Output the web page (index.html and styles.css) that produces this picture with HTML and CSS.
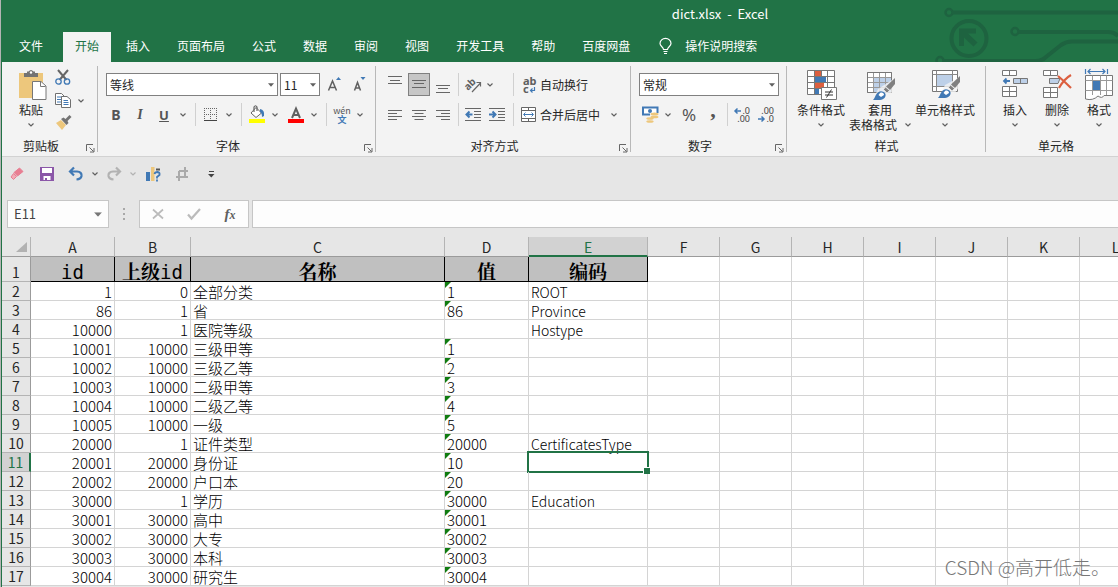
FILE: index.html
```html
<!DOCTYPE html>
<html lang="zh-CN">
<head>
<meta charset="utf-8">
<title>dict.xlsx - Excel</title>
<link rel="stylesheet" href="styles.css">
</head>
<body>
<svg class="defs" aria-hidden="true">
  <symbol id="chev" viewBox="0 0 6 4"><path d="M.5 .5L3 3L5.500 .5" fill="none" stroke="currentColor" stroke-width="1.200"/></symbol>
  <symbol id="tri" viewBox="0 0 7 4"><path d="M0 0H7L3.500 4Z" fill="currentColor"/></symbol>
  <symbol id="launch" viewBox="0 0 9 9"><path d="M.5 7V.5H7M3.500 3.500L7.500 7.500M8 4V8H4" fill="none" stroke="#666"/></symbol>
  <symbol id="brush" viewBox="0 0 24 24"><path d="M23 1V7L18 13L14 9.500Z" fill="#808080"/><path d="M13.500 10L17.500 13.500L15 16L11.500 12.500Z" fill="#808080" stroke="#f3f3f3" stroke-width=".7"/><path d="M1 23C3 21 3 19 4.500 17C7 13 11 14 13 16C15 19 12 23 8 23Z" fill="#4179b5"/><path d="M8 16C10 15 12 16 12 18L9 20L6.500 18Z" fill="#fff"/></symbol>
</svg>
<div class="app">
  <header class="top">
    <svg class="circuit" width="190" height="62" viewBox="0 0 190 62" aria-hidden="true">
      <g fill="none" stroke="#1e6340" stroke-width="4">
        <circle cx="21" cy="12.500" r="3.500" stroke-width="2.500"/><path d="M25 12.500H190"/>
        <circle cx="87" cy="31.500" r="3.500" stroke-width="2.500"/><path d="M91 32H180Q186 32 190 36"/>
        <circle cx="12" cy="60.500" r="3.500" stroke-width="2.500"/><path d="M16 61H108Q114 61 118 57L133 45Q138 41.500 144 41.500H190"/>
        <circle cx="41" cy="38.500" r="17.500"/>
      </g>
      <path d="M31 28.500H48V33.500H40L49.500 42.500L45.500 46.500L36 37.500V46H31Z" fill="#1e6340"/>
    </svg>
    <h1 class="title">dict.xlsx&nbsp; -&nbsp; Excel</h1>
    <nav class="tabs">
      <button class="tab file">文件</button>
      <button class="tab active">开始</button>
      <button class="tab">插入</button>
      <button class="tab">页面布局</button>
      <button class="tab">公式</button>
      <button class="tab">数据</button>
      <button class="tab">审阅</button>
      <button class="tab">视图</button>
      <button class="tab">开发工具</button>
      <button class="tab">帮助</button>
      <button class="tab">百度网盘</button>
      <button class="tab tell"><svg width="13" height="17" viewBox="0 0 13 17"><path d="M4.500 11.500C4.500 9 1 8.500 1 5.500A5.300 5 0 0 1 12 5.500C12 8.500 8.500 9 8.500 11.500Z" fill="none" stroke="#fff" stroke-width="1.200"/><path d="M4.500 13.500H8.500M5 15.500H8" stroke="#fff"/></svg>操作说明搜索</button>
    </nav>
  </header>

  <section class="ribbon" aria-label="功能区">
    <div class="group clip">
      <div class="body cols">
        <button class="big paste"><svg width="30" height="32" viewBox="0 0 30 32"><g transform="translate(2 0)"><path d="M1 3H25V28H1Z" fill="#edc77c"/><path d="M6 3H9V1.500H10.500Q13 -1.500 15.500 1.500H17V3H20V7H6Z" fill="#737373"/><circle cx="13" cy="2.500" r="1.200" fill="#fff"/><path d="M14.500 11.500H23L28 16V29.500H14.500Z" fill="#fff" stroke="#777"/><path d="M22.500 12V16.500H27.500" fill="none" stroke="#777"/></g></svg><span>粘贴</span><svg class="chev"><use href="#chev"/></svg></button>
        <div class="stack">
          <button aria-label="剪切" class="sm"><svg width="16" height="17" viewBox="0 0 16 17"><path d="M3 1L11.500 11M13 1L4.500 11" stroke="#666" stroke-width="2"/><circle cx="3.500" cy="12.500" r="2.700" fill="none" stroke="#4179b5" stroke-width="1.300"/><circle cx="12" cy="12.500" r="2.700" fill="none" stroke="#4179b5" stroke-width="1.300"/></svg></button>
          <div class="line"><button aria-label="复制" class="sm"><svg width="16" height="15" viewBox="0 0 16 15"><path d="M.5 .5H6.500L9 3V11.500H.5Z" fill="#fff" stroke="#707070"/><path d="M2 4H7M2 6.500H6M2 9H6" stroke="#4179b5"/><path d="M6.500 3.500H12L15.500 6.500V14.500H6.500Z" fill="#fff" stroke="#707070"/><path d="M8.500 7.500H13M8.500 9.500H13.500M8.500 11.500H13.500" stroke="#4179b5"/></svg></button><button aria-label="复制选项" class="dd"><svg class="chev"><use href="#chev"/></svg></button></div>
          <button aria-label="格式刷" class="sm"><svg width="17" height="15" viewBox="0 0 17 15"><path d="M1 7L6 4L11 9L7 14Z" fill="#edc77c"/><path d="M6 3L8.500 1.500L10.500 3L14.500 -1L16.500 1L12.500 5L13.500 7L11.500 9Z" fill="#737373"/></svg></button>
        </div>
      </div>
      <div class="caption"><span>剪贴板</span><button aria-label="剪贴板设置" class="launch"><svg width="9" height="9"><use href="#launch"/></svg></button></div>
    </div>

    <div class="group font">
      <div class="body rows">
        <div class="line combos">
          <label class="combo wide"><select aria-label="字体"><option>等线</option></select><svg width="6" height="4"><use href="#tri"/></svg></label>
          <label class="combo size"><select aria-label="字号"><option>11</option></select><svg width="6" height="4"><use href="#tri"/></svg></label>
          <button aria-label="增大字号" class="b24"><svg width="14" height="16" viewBox="0 0 14 16"><path d="M1.500 13.500L5.500 4L9.500 13.500M3 10.500H8" fill="none" stroke="#606060" stroke-width="1.500"/><path d="M9 3L11.500 0L14 3Z" fill="#4179b5"/></svg></button>
          <button aria-label="减小字号" class="b24"><svg width="14" height="16" viewBox="0 0 14 16"><path d="M1.500 13.500L4.500 5.500L7.500 13.500M2.500 11H6.500" fill="none" stroke="#606060" stroke-width="1.500"/><path d="M7.500 0H12.500L10 3Z" fill="#4179b5"/></svg></button>
        </div>
        <div class="line">
          <button class="b24 bold">B</button><button class="b24 ital">I</button><button class="b24 under">U</button>
          <button aria-label="下划线选项" class="dd"><svg class="chev"><use href="#chev"/></svg></button><i class="sep"></i>
          <button aria-label="边框" class="b22"><svg width="14" height="14" viewBox="0 0 14 14"><path d="M0 .5H13M.5 0V12M12.500 0V12M6.500 0V12M0 6.500H13" fill="none" stroke="#666" stroke-dasharray="1 1"/><path d="M0 12.500H13" stroke="#444"/></svg></button>
          <button aria-label="边框选项" class="dd"><svg class="chev"><use href="#chev"/></svg></button><i class="sep"></i>
          <button aria-label="填充颜色" class="b22"><svg width="18" height="18" viewBox="0 0 18 18"><path d="M3 7L8 1.500L13.500 7L8 11.500Z" fill="#fff" stroke="#666"/><path d="M6 6V1Q7.500 -1.500 9 1V5" fill="none" stroke="#666" stroke-width="1.200"/><path d="M12 3Q17 4 16 10L14 11Q14 7 12 6Z" fill="#4179b5"/><path d="M1 13H17V17H1Z" fill="#ff0"/></svg></button>
          <button aria-label="填充颜色选项" class="dd"><svg class="chev"><use href="#chev"/></svg></button>
          <button aria-label="字体颜色" class="b25"><svg width="16" height="18" viewBox="0 0 16 18"><path d="M4 12L8 2.500L12 12M5.500 9H10.500" fill="none" stroke="#606060" stroke-width="2"/><path d="M0 13H16V17H0Z" fill="red"/></svg></button>
          <button aria-label="字体颜色选项" class="dd"><svg class="chev"><use href="#chev"/></svg></button><i class="sep"></i>
          <button class="b22 pinyin"><span>wén</span><b>文</b></button>
          <button aria-label="拼音选项" class="dd"><svg class="chev"><use href="#chev"/></svg></button>
        </div>
      </div>
      <div class="caption"><span>字体</span><button aria-label="字体设置" class="launch"><svg width="9" height="9"><use href="#launch"/></svg></button></div>
    </div>

    <div class="group align">
      <div class="body rows">
        <div class="line">
          <button aria-label="顶端对齐" class="b24"><svg width="14" height="16" viewBox="0 0 14 16"><path d="M0 -.5H14M2 3.500H12M0 6.500H14" stroke="#666"/></svg></button>
          <button aria-label="垂直居中" class="b24 on"><svg width="14" height="16" viewBox="0 0 14 16"><path d="M0 3.500H14M2 6.500H12M0 10.500H14" stroke="#666"/></svg></button>
          <button aria-label="底端对齐" class="b24"><svg width="14" height="16" viewBox="0 0 14 16"><path d="M0 8.500H14M2 11.500H12M0 15.500H14" stroke="#666"/></svg></button>
          <i class="sep thin"></i>
          <button aria-label="方向" class="b24"><svg width="17" height="16" viewBox="0 0 17 16"><text x="0" y="11" transform="rotate(-45 5 9)" class="ab">ab</text><path d="M7 15L15.500 6M11.500 5.500H15.500V9.500" fill="none" stroke="#666" stroke-width="1.200"/></svg></button>
          <button aria-label="方向选项" class="dd after"><svg class="chev"><use href="#chev"/></svg></button>
          <i class="sep edge"></i>
          <button class="txt"><span class="wrap"><span>ab</span><span>c<svg width="6" height="6" viewBox="0 0 6 6"><path d="M4.500 0V3.500H.5M2.500 1.500L.5 3.500L2.500 5.500" fill="none" stroke="#4179b5" stroke-width="1.200"/></svg></span></span>自动换行</button>
        </div>
        <div class="line">
          <button aria-label="左对齐" class="b24"><svg width="14" height="12" viewBox="0 0 14 12"><path d="M0 1.500H14M0 4.500H9M0 7.500H14M0 10.500H9" stroke="#666"/></svg></button>
          <button aria-label="居中" class="b24"><svg width="14" height="12" viewBox="0 0 14 12"><path d="M0 1.500H14M2.500 4.500H11.500M0 7.500H14M2.500 10.500H11.500" stroke="#666"/></svg></button>
          <button aria-label="右对齐" class="b24"><svg width="14" height="12" viewBox="0 0 14 12"><path d="M0 1.500H14M5 4.500H14M0 7.500H14M5 10.500H14" stroke="#666"/></svg></button>
          <i class="sep thin"></i>
          <button aria-label="减少缩进" class="b24"><svg width="16" height="14" viewBox="0 0 16 14"><path d="M0 .5H16M9 3.500H16M9 6.500H16M9 9.500H16M0 12.500H16" stroke="#666"/><path d="M7.500 6.500H2M4.500 3.500L1.500 6.500L4.500 9.500" fill="none" stroke="#4179b5" stroke-width="2"/></svg></button>
          <button aria-label="增加缩进" class="b24"><svg width="16" height="14" viewBox="0 0 16 14"><path d="M0 .5H16M9 3.500H16M9 6.500H16M9 9.500H16M0 12.500H16" stroke="#666"/><path d="M0 6.500H6M3.500 3.500L6.500 6.500L3.500 9.500" fill="none" stroke="#4179b5" stroke-width="2"/></svg></button>
          <i class="sep edge"></i>
          <button class="txt"><svg width="18" height="15" viewBox="0 0 18 15"><path d="M1.500 .5H15.500V14.500H1.500ZM1.500 3.500H15.500M1.500 11.500H15.500M8.500 .5V3.500M8.500 11.500V14.500" fill="#fff" stroke="#666"/><path d="M4 7.500H13M5.500 5.500L3.500 7.500L5.500 9.500M11.500 5.500L13.500 7.500L11.500 9.500" fill="none" stroke="#4179b5"/></svg>合并后居中</button>
          <button aria-label="合并选项" class="dd"><svg class="chev"><use href="#chev"/></svg></button>
        </div>
      </div>
      <div class="caption"><span>对齐方式</span><button aria-label="对齐设置" class="launch"><svg width="9" height="9"><use href="#launch"/></svg></button></div>
    </div>

    <div class="group number">
      <div class="body rows">
        <div class="line"><label class="combo full"><select aria-label="数字格式"><option>常规</option></select><svg width="6" height="4"><use href="#tri"/></svg></label></div>
        <div class="line">
          <button aria-label="会计格式" class="b22"><svg width="17" height="17" viewBox="0 0 17 17"><path d="M1 1.500H15.500V8.500H1Z" fill="#fff" stroke="#4179b5" stroke-width="2"/><circle cx="8" cy="5" r="2" fill="#4179b5"/><path d="M8 7H17V17H4V11H8Z" fill="#f3f3f3"/><g fill="#edc77c"><ellipse cx="12.500" cy="8" rx="4" ry="1.600"/><ellipse cx="12.500" cy="11" rx="4" ry="1.300"/><ellipse cx="8" cy="12.500" rx="3.700" ry="1.300"/><ellipse cx="8" cy="15.500" rx="3.700" ry="1.300"/></g></svg></button>
          <button aria-label="会计格式选项" class="dd"><svg class="chev"><use href="#chev"/></svg></button>
          <button class="pct">%</button>
          <button class="comma">,</button>
          <i class="sep thin"></i>
          <button aria-label="增加小数位数" class="b24 dec"><span><svg width="7" height="6" viewBox="0 0 7 6"><path d="M7 3H1M3.500 .5L1 3L3.500 5.500" fill="none" stroke="#4179b5" stroke-width="1.500"/></svg>.0</span><span>.00</span></button>
          <button aria-label="减少小数位数" class="b24 dec"><span>.00</span><span><svg width="7" height="6" viewBox="0 0 7 6"><path d="M0 3H6M3.500 .5L6 3L3.500 5.500" fill="none" stroke="#4179b5" stroke-width="1.500"/></svg>.0</span></button>
        </div>
      </div>
      <div class="caption"><span>数字</span><button aria-label="数字设置" class="launch"><svg width="9" height="9"><use href="#launch"/></svg></button></div>
    </div>

    <div class="group styles">
      <div class="body cols">
        <button class="big w52"><svg width="30" height="32" viewBox="0 0 30 32"><g transform="translate(1 0)"><path d="M.5 .5H27.500V24.500H.5Z" fill="#fff"/><path d="M8 .5H14V6H8ZM8 13H17V18H8Z" fill="#dc5f3f"/><path d="M8 7H19V12H8ZM8 19H12V25H8Z" fill="#4179b5"/><path d="M.5 .5H27.500V24.500H.5ZM7.500 .5V24.500M14.500 .5V7M20.500 .5V18M.5 6.500H27.500M.5 12.500H27.500M.5 18.500H27.500" fill="none" stroke="#777"/><path d="M14.500 17.500H29.500V29.500H14.500Z" fill="#fff" stroke="#777"/><path d="M18 22H26M18 25H26M24.500 19.500L19.500 27.500" stroke="#333"/></g></svg><span>条件格式</span><svg class="chev"><use href="#chev"/></svg></button>
        <button class="big w66"><svg width="30" height="32" viewBox="0 0 30 32"><g transform="translate(1 0)"><path d="M1.500 2.500H25.500V22.500H1.500Z" fill="#fff"/><path d="M7 8H25V22H7Z" fill="#bdd0e8"/><path d="M1.500 2.500H25.500V22.500H1.500ZM1.500 7.500H25.500M1.500 12.500H25.500M1.500 17.500H25.500M7.500 2.500V22.500M13.500 2.500V22.500M19.500 2.500V22.500" fill="none" stroke="#999"/><path d="M1.500 2.500H25.500V22.500H1.500Z" fill="none" stroke="#777"/><path d="M29 8L12 19L7 30H20L29 18Z" fill="#f3f3f3" opacity=".8"/><use href="#brush" x="6" y="7" width="24" height="24"/></g></svg><span>套用</span><span class="second">表格格式<svg class="chev"><use href="#chev"/></svg></span></button>
        <button class="big w64"><svg width="30" height="32" viewBox="0 0 30 32"><g transform="translate(1 0)"><path d="M1.500 .5H26.500V21.500H1.500Z" fill="#fff" stroke="#777"/><path d="M6 5H21V16H6Z" fill="#bdd0e8"/><path d="M5.500 .5V21.500M21.500 .5V21.500M1.500 4.500H26.500M1.500 16.500H26.500" stroke="#888"/><path d="M29 7L14 15L8 28H20L29 16Z" fill="#f3f3f3" opacity=".8"/><use href="#brush" x="6" y="5" width="24" height="24"/></g></svg><span>单元格样式</span><svg class="chev"><use href="#chev"/></svg></button>
      </div>
      <div class="caption"><span>样式</span></div>
    </div>

    <div class="group cells">
      <div class="body cols">
        <button class="big w42"><svg width="28" height="32" viewBox="0 0 28 32"><path d="M1.500 .5H15.500V5.500H1.500ZM8.500 .5V5.500M1.500 16.500H15.500V26.500H1.500ZM1.500 21.500H15.500M8.500 16.500V26.500" fill="#fff" stroke="#777"/><path d="M12.500 8.500H26.500V13.500H12.500ZM19.500 8.500V13.500" fill="#bdd0e8" stroke="#777"/><path d="M9 11H3M5.500 8.500L3 11L5.500 13.500" fill="none" stroke="#4179b5" stroke-width="1.800"/></svg><span>插入</span><svg class="chev"><use href="#chev"/></svg></button>
        <button class="big w42"><svg width="30" height="32" viewBox="0 0 30 32"><path d="M1.500 .5H15.500V5.500H1.500ZM8.500 .5V5.500M1.500 17.500H15.500V27.500H1.500ZM1.500 22.500H15.500M8.500 17.500V27.500" fill="#fff" stroke="#777"/><path d="M7.500 8.500H18L16 13.500H7.500Z" fill="#bdd0e8" stroke="#777"/><path d="M16 6Q22 11 29 18M29 5Q22 9 17 18" fill="none" stroke="#dc5f3f" stroke-width="2.200"/></svg><span>删除</span><svg class="chev"><use href="#chev"/></svg></button>
        <button class="big w42"><svg width="28" height="32" viewBox="0 0 28 32"><path d="M.5 -1V4M22.500 -1V4M3 1.500H20M5.500 -1L3 1.500L5.500 4M17.500 -1L20 1.500L17.500 4" fill="none" stroke="#4179b5" stroke-width="1.200"/><path d="M.5 5.500H27.500V25.500H19Q17 29 13 26Q8 31 .5 29Z" fill="#fff" stroke="#777"/><path d="M.5 10.500H27.500M.5 20.500H27.500M7.500 5.500V25M15.500 5.500V25M21.500 5.500V25" stroke="#999"/><path d="M8 11H15V20H8Z" fill="#4179b5"/></svg><span>格式</span><svg class="chev"><use href="#chev"/></svg></button>
      </div>
      <div class="caption"><span>单元格</span></div>
    </div>
  </section>

  <div class="qat">
    <button aria-label="橡皮擦" class="q30"><svg width="14" height="14" viewBox="0 0 14 14"><path d="M9.500 1L13 4.500L7.500 9L4 5.500Z" fill="#e87e92" stroke="#e87e92"/><path d="M3.500 6.500L6.500 9.500L3.500 12.500L1 10Z" fill="#f3aab5" stroke="#e87e92"/></svg></button>
    <button aria-label="保存" class="q30"><svg width="14" height="14" viewBox="0 0 14 14"><path d="M0 0H14V14H0Z" fill="#8b57a8"/><path d="M2 1H12V6H2ZM3.500 9H10.500V13H7V11H5V13H3.500Z" fill="#fff"/></svg></button>
    <button aria-label="撤消" class="q28"><svg width="16" height="14" viewBox="0 0 16 14"><path d="M2 4.500H9Q14 5 13.500 9Q13 12 8.500 12.500M6 .5L2 4.500L6 8.500" fill="none" stroke="#4179b5" stroke-width="2.200"/></svg></button>
    <button aria-label="撤消选项" class="q10"><svg class="chev"><use href="#chev"/></svg></button>
    <button aria-label="恢复" class="q28" disabled><svg width="16" height="14" viewBox="0 0 16 14"><path d="M14 4.500H7Q2 5 2.500 9Q3 12 7.500 12.500M10 .5L14 4.500L10 8.500" fill="none" stroke="#b2b2b2" stroke-width="2.200"/></svg></button>
    <button aria-label="恢复选项" class="q10" disabled><svg class="chev"><use href="#chev"/></svg></button>
    <button aria-label="图表" class="q30"><svg width="16" height="16" viewBox="0 0 16 16"><path d="M1 6H5V15H1Z" fill="#4179b5"/><path d="M6 1H9.500V15H6Z" fill="#edc77c"/><path d="M11 2.500H15V4.500H11Z" fill="#555"/><path d="M9.500 8Q10 6 12.500 6Q15 6.500 14.500 9L12 11V12.500M12 13.500V15.500" fill="none" stroke="#4179b5" stroke-width="1.800"/></svg></button>
    <button aria-label="裁剪" class="q28" disabled><svg width="14" height="14" viewBox="0 0 14 14"><path d="M4 4V10H13M4 10V14M10 0V10M1 10H4M4 4H13" fill="none" stroke="#aaa" stroke-width="2"/></svg></button>
    <button aria-label="自定义" class="q30"><svg width="7" height="7" viewBox="0 0 7 7"><path d="M1 .5H6" stroke="#444"/><path d="M0 3H6.500L3.300 6.500Z" fill="#444"/></svg></button>
  </div>

  <div class="formula">
    <label class="name"><input aria-label="名称框" value="E11"><svg width="8" height="5" viewBox="0 0 7 4"><use href="#tri"/></svg></label>
    <svg class="dots" width="30" height="12" viewBox="0 0 30 12"><path d="M14 0H16V2H14ZM14 5H16V7H14ZM14 10H16V12H14Z" fill="#a8a8a8"/></svg>
    <div class="fbtns">
      <button aria-label="取消"><svg width="12" height="12" viewBox="0 0 12 12"><path d="M1 1.500L11 10.500M11 1.500L1 10.500" stroke="#bbb" stroke-width="1.700"/></svg></button>
      <button aria-label="输入"><svg width="14" height="12" viewBox="0 0 14 12"><path d="M1 6.500L4.500 10.500L13 1" fill="none" stroke="#bbb" stroke-width="2.200"/></svg></button>
      <button class="fx">f<small>x</small></button>
    </div>
    <input class="bar" aria-label="编辑栏">
  </div>

  <main class="sheet">
    <table>
      <colgroup><col class="ch"><col class="ca"><col class="cb"><col class="cc"><col class="ca"><col class="ce"><col class="cf" span="7"></colgroup>
      <thead><tr><th class="corner"><svg width="12" height="12" viewBox="0 0 12 12"><path d="M11 1V11H0Z" fill="#b2b2b2"/></svg></th><th>A</th><th>B</th><th>C</th><th>D</th><th class="sel">E</th><th>F</th><th>G</th><th>H</th><th>I</th><th>J</th><th>K</th><th>L</th></tr></thead>
      <tbody>
      <tr class="head"><th>1</th><td><span class="lat">id</span></td><td>上级<span class="lat">id</span></td><td>名称</td><td>值</td><td>编码</td><td></td><td></td><td></td><td></td><td></td><td></td><td></td></tr>
      <tr><th>2</th><td>1</td><td>0</td><td>全部分类</td><td class="t">1</td><td>ROOT</td><td></td><td></td><td></td><td></td><td></td><td></td><td></td></tr>
      <tr><th>3</th><td>86</td><td>1</td><td>省</td><td class="t">86</td><td>Province</td><td></td><td></td><td></td><td></td><td></td><td></td><td></td></tr>
      <tr><th>4</th><td>10000</td><td>1</td><td>医院等级</td><td></td><td>Hostype</td><td></td><td></td><td></td><td></td><td></td><td></td><td></td></tr>
      <tr><th>5</th><td>10001</td><td>10000</td><td>三级甲等</td><td class="t">1</td><td></td><td></td><td></td><td></td><td></td><td></td><td></td><td></td></tr>
      <tr><th>6</th><td>10002</td><td>10000</td><td>三级乙等</td><td class="t">2</td><td></td><td></td><td></td><td></td><td></td><td></td><td></td><td></td></tr>
      <tr><th>7</th><td>10003</td><td>10000</td><td>二级甲等</td><td class="t">3</td><td></td><td></td><td></td><td></td><td></td><td></td><td></td><td></td></tr>
      <tr><th>8</th><td>10004</td><td>10000</td><td>二级乙等</td><td class="t">4</td><td></td><td></td><td></td><td></td><td></td><td></td><td></td><td></td></tr>
      <tr><th>9</th><td>10005</td><td>10000</td><td>一级</td><td class="t">5</td><td></td><td></td><td></td><td></td><td></td><td></td><td></td><td></td></tr>
      <tr><th>10</th><td>20000</td><td>1</td><td>证件类型</td><td class="t">20000</td><td>CertificatesType</td><td></td><td></td><td></td><td></td><td></td><td></td><td></td></tr>
      <tr><th class="sel">11</th><td>20001</td><td>20000</td><td>身份证</td><td class="t">10</td><td class="cur"></td><td></td><td></td><td></td><td></td><td></td><td></td><td></td></tr>
      <tr><th>12</th><td>20002</td><td>20000</td><td>户口本</td><td class="t">20</td><td></td><td></td><td></td><td></td><td></td><td></td><td></td><td></td></tr>
      <tr><th>13</th><td>30000</td><td>1</td><td>学历</td><td class="t">30000</td><td>Education</td><td></td><td></td><td></td><td></td><td></td><td></td><td></td></tr>
      <tr><th>14</th><td>30001</td><td>30000</td><td>高中</td><td class="t">30001</td><td></td><td></td><td></td><td></td><td></td><td></td><td></td><td></td></tr>
      <tr><th>15</th><td>30002</td><td>30000</td><td>大专</td><td class="t">30002</td><td></td><td></td><td></td><td></td><td></td><td></td><td></td><td></td></tr>
      <tr><th>16</th><td>30003</td><td>30000</td><td>本科</td><td class="t">30003</td><td></td><td></td><td></td><td></td><td></td><td></td><td></td><td></td></tr>
      <tr><th>17</th><td>30004</td><td>30000</td><td>研究生</td><td class="t">30004</td><td></td><td></td><td></td><td></td><td></td><td></td><td></td><td></td></tr>
      </tbody>
    </table>
    <span class="mark">CSDN @高开低走。</span>
  </main>
</div>
</body>
</html>
```

FILE: styles.css
```css
* { box-sizing: border-box; }
body {
  margin: 0;
  overflow: hidden;
  font: 12px/16px "Noto Sans CJK SC", sans-serif;
  color: #262626;
  background: #e6e6e6;
}
button, input, select { font: inherit; color: inherit; border: 0; background: none; padding: 0; margin: 0; }
button { display: flex; align-items: center; justify-content: center; flex: none; }
svg { flex: none; display: block; overflow: visible; }
.defs { position: absolute; width: 0; height: 0; }
.app { min-height: 100vh; border-left: 1px solid #217346; margin-left: 1px; box-shadow: -1px 0 #b4b4b4; overflow: hidden; }

/* title bar and tabs */
.top { position: relative; background: #217346; color: #fff; }
.circuit { position: absolute; right: 0; top: 0; overflow: hidden; }
.title { position: relative; margin: 0; height: 32px; padding-left: 320px; font-size: 13px; font-weight: 400; line-height: 28px; text-align: center; }
.tabs { position: relative; display: flex; gap: 3px; padding-left: 5px; height: 30px; }
.tab { padding: 0 12px 2px; }
.tab.file { margin-right: 5px; }
.tab.active { background: #f3f3f3; color: #217346; }
.tab.tell { gap: 13px; margin-left: 2px; }

/* ribbon */
.ribbon { display: flex; background: #f3f3f3; border-bottom: 1px solid #d2d2d2; overflow: hidden; }
.group { position: relative; flex: none; display: flex; flex-direction: column; }
.group::after { content: ""; position: absolute; right: 0; top: 4px; bottom: 4px; width: 1px; background: #b8b8b8; }
.clip { width: 96px; }
.font { width: 278px; }
.align { width: 255px; }
.number { width: 156px; }
.styles { width: 199px; }
.cells { width: 140px; }
.body { height: 74px; display: flex; }
.rows { flex-direction: column; gap: 7px; padding: 11px 0 0 6px; }
.align .rows { padding-left: 7px; }
.number .rows { padding-left: 8px; }
.cols { padding: 8px 0 0 8px; }
.line { display: flex; height: 23px; align-items: stretch; }
.combos { padding-left: 2px; gap: 2px; }
.caption { display: flex; height: 20px; align-items: center; }
.caption span { flex: 1; text-align: center; }
.launch { width: 18px; padding: 4px 0 0 2px; }
.chev { width: 6px; height: 4px; color: #606060; }
.b22 { width: 22px; }
.b24 { width: 24px; color: #555; }
.b25 { width: 25px; padding-left: 3px; }
.dd { width: 14px; }
.dd.after { width: 24px; padding-right: 14px; }
.sep { width: 10px; flex: none; display: flex; justify-content: center; }
.sep::before { content: ""; width: 1px; background: #d0d0d0; }
.sep.thin { width: 6px; }
.sep.edge { width: 8px; }
.number .sep { width: 8px; }
.on { background: #c6c6c6; border: 1px solid #808080; width: 22px; margin: 0 1px; }
.bold { font: bold 14px "Noto Sans", sans-serif; }
.ital { font: italic bold 14px "Liberation Serif", serif; }
.under { font: bold 13px "Noto Sans", sans-serif; text-decoration: underline; }
.pinyin { flex-direction: column; color: #555; font-size: 9px; line-height: 9px; }
.pinyin b { color: #4179b5; }
.ab { font: bold 10px "Noto Sans", sans-serif; fill: #606060; }
.wrap { width: 18px; padding-left: 3px; font: bold 11px/8px "Noto Sans", sans-serif; color: #606060; display: flex; flex-direction: column; }
.wrap span { display: flex; gap: 1px; align-items: flex-end; }
.dec { flex-direction: column; align-items: flex-end; padding-right: 5px; font: 9px/8px "Noto Sans", sans-serif; color: #444; }
.dec span { display: flex; gap: 1px; align-items: center; }
.pct { width: 28px; font: 17px "Noto Sans", sans-serif; color: #555; }
.comma { width: 20px; font: bold 22px/10px "Liberation Serif", serif; color: #555; padding-bottom: 10px; }
.txt { gap: 2px; padding-left: 3px; padding-right: 7px; }
.combo { display: flex; align-items: center; position: relative; }
.combo select { appearance: none; width: 100%; height: 23px; padding: 0 3px; background: #fff; border: 1px solid #808080; border-radius: 0; }
.combo svg { position: absolute; right: 4px; color: #606060; }
.wide { width: 172px; }
.size { width: 40px; }
.full { width: 140px; }
.big { flex-direction: column; justify-content: flex-start; line-height: 15px; white-space: nowrap; }
.big > .chev { margin-top: 6px; }
.second { display: flex; align-items: center; gap: 8px; }
.paste { width: 42px; }
.w52 { width: 52px; }
.w66 { width: 66px; }
.w64 { width: 64px; }
.w42 { width: 42px; }
.stack { display: flex; flex-direction: column; margin-top: -4px; }
.stack .line, .stack .sm { height: 23px; }
.sm { width: 22px; }
.stack .dd { width: 14px; }

/* quick access */
.qat { display: flex; height: 34px; align-items: center; }
.q30 { width: 30px; }
.q28 { width: 28px; }
.q10 { width: 10px; }
.qat button:disabled .chev { color: #b2b2b2; }

/* formula bar */
.formula { display: flex; align-items: center; padding: 9px 0 9px 5px; color: #444; }
.name { display: flex; align-items: center; width: 102px; height: 28px; padding: 0 6px; background: #fdfdfd; border: 1px solid #c6c6c6; color: #777; }
.name input { flex: 1; min-width: 0; color: #444; font-size: 13px; }
.fbtns { display: flex; justify-content: space-around; width: 110px; height: 28px; background: #fdfdfd; border: 1px solid #c6c6c6; margin-right: 3px; }
.fbtns button { width: 30px; }
.fbtns .fx { font: italic bold 15px "Liberation Serif", serif; color: #606060; }
.fx small { font-size: 12px; padding-top: 3px; }
.bar { flex: 1; min-width: 0; height: 28px; background: #fdfdfd; border: 1px solid #c6c6c6; border-right: 0; }

/* grid */
.sheet { position: relative; }
table { table-layout: fixed; width: 1150px; border-collapse: separate; border-spacing: 0; font-size: 15px; font-weight: 300; line-height: 17px; color: #000; background: #fff; }
.ch { width: 29px; }
.ca { width: 84px; }
.cb { width: 76px; }
.cc { width: 254px; }
.ce { width: 119px; }
.cf { width: 72px; }
th, td { height: 19px; padding: 1px 2px 0; border: solid #d4d4d4; border-width: 0 1px 1px 0; white-space: nowrap; }
td:nth-child(6) { font-size: 14px; line-height: 16px; padding-top: 2px; }
th { font-weight: 400; background: #e6e6e6; text-align: center; color: #262626; }
thead th { height: 20px; font-size: 14px; border-color: #9b9b9b #b4b4b4; }
thead th.sel { color: #217346; background: #d2d2d2; border-bottom: 2px solid #217346; padding-top: 2px; line-height: 16px; }
.corner svg { margin-left: auto; }
tbody th { padding: 1px 0 0; font-size: 14px; border-color: #b4b4b4 #9b9b9b; }
tbody th.sel { color: #217346; background: #d2d2d2; border-right: 2px solid #217346; }
td:nth-child(2), td:nth-child(3) { text-align: right; }
.head td, .head th { height: 25px; }
.head th { padding-top: 6px; }
.head td:nth-child(-n+6) { background: #c0c0c0; border-color: #000; text-align: center; font: bold 19px/18px "Noto Serif CJK SC", "Noto Sans CJK SC", serif; padding: 5px 0 0; vertical-align: top; }
.lat { font-family: "DejaVu Sans Mono", monospace; font-weight: 400; }
.t { position: relative; }
.t::before { content: ""; position: absolute; left: 0; top: 0; border-top: 6px solid #107c10; border-right: 6px solid transparent; }
.cur { position: relative; }
.cur::before { content: ""; position: absolute; inset: -2px; border: 2px solid #217346; }
.cur::after { content: ""; position: absolute; right: -3px; bottom: -3px; width: 6px; height: 6px; background: #217346; border: solid #fff; border-width: 1px 0 0 1px; }
.mark { position: absolute; right: 8px; bottom: 8px; font-size: 19px; font-weight: 300; line-height: 22px; color: #777; }
```
